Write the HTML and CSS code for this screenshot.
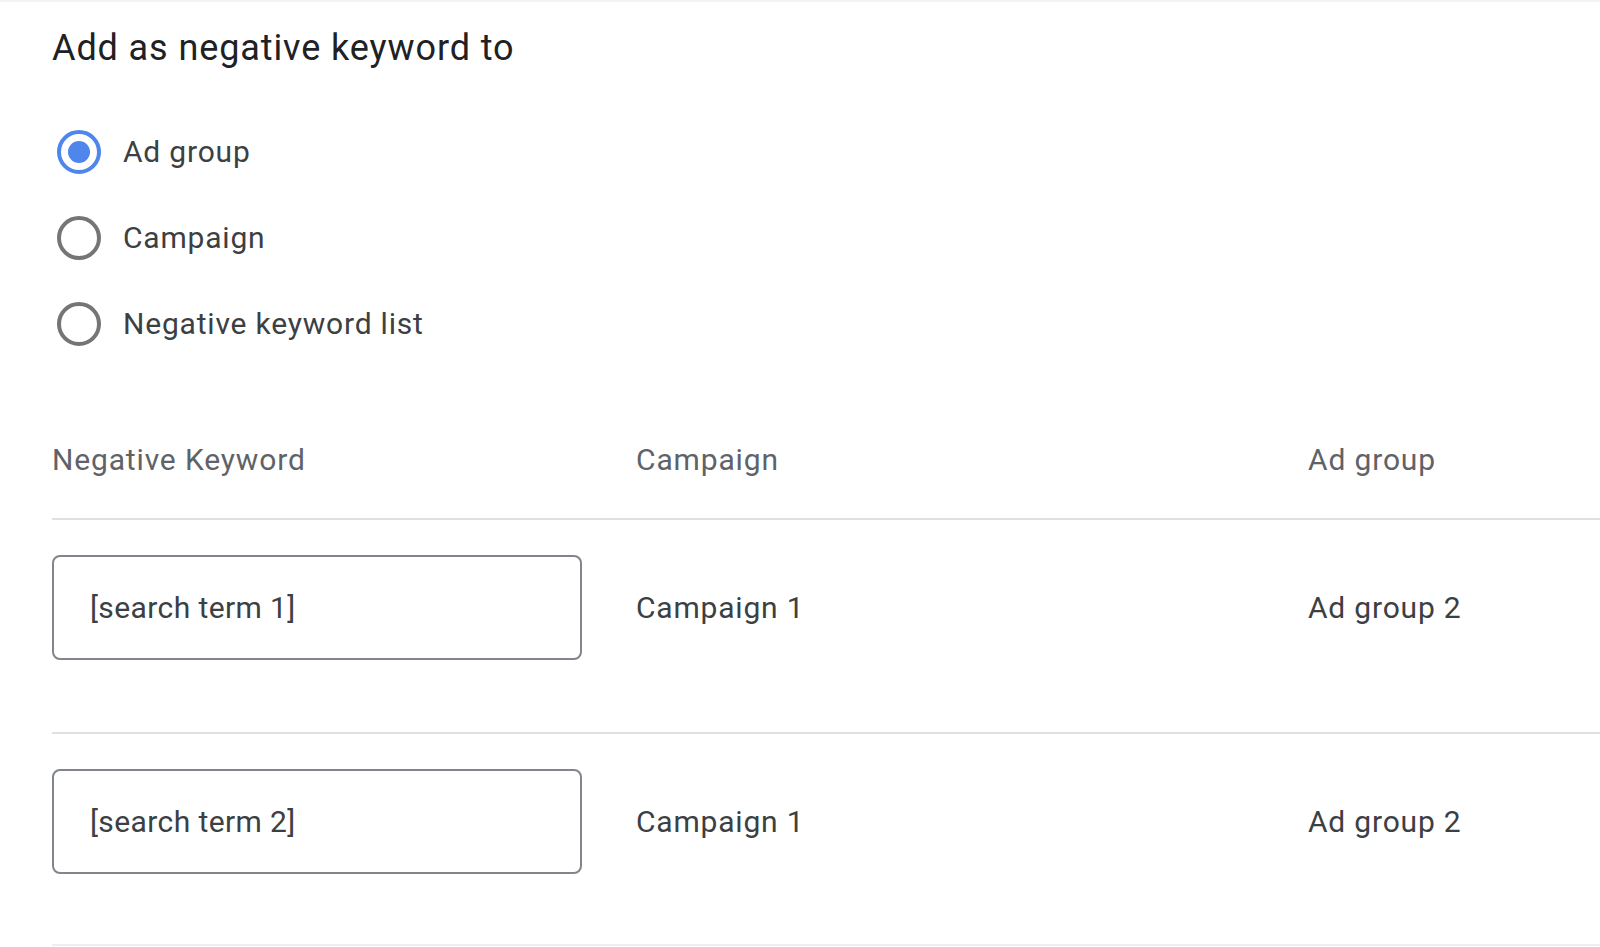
FILE: index.html
```html
<!DOCTYPE html>
<html lang="en">
<head>
<meta charset="utf-8">
<title>Add as negative keyword to</title>
<link rel="stylesheet" href="styles.css">
</head>
<body>
<div class="page">
  <h1 class="title">Add as negative keyword to</h1>
  <div class="radios">
    <label class="radio-row">
      <span class="radio checked"><span class="dot"></span></span>
      <span class="radio-label">Ad group</span>
    </label>
    <label class="radio-row">
      <span class="radio"></span>
      <span class="radio-label">Campaign</span>
    </label>
    <label class="radio-row">
      <span class="radio"></span>
      <span class="radio-label">Negative keyword list</span>
    </label>
  </div>
  <div class="table">
    <div class="thead">
      <div class="th">Negative Keyword</div>
      <div class="th">Campaign</div>
      <div class="th">Ad group</div>
    </div>
    <div class="tr">
      <div class="td"><input class="kw-input" type="text" value="[search term 1]"></div>
      <div class="td">Campaign 1</div>
      <div class="td">Ad group 2</div>
    </div>
    <div class="tr">
      <div class="td"><input class="kw-input" type="text" value="[search term 2]"></div>
      <div class="td">Campaign 1</div>
      <div class="td">Ad group 2</div>
    </div>
  </div>
</div>
</body>
</html>
```
FILE: styles.css
```css
html, body {
  margin: 0;
  padding: 0;
  background: #ffffff;
}
body {
  font-family: Roboto, "Liberation Sans", Arial, sans-serif;
  color: #3c4043;
  border-top: 2px solid #f1f3f4;
  overflow: hidden;
}
.page {
  padding-left: 52px;
}
.title {
  margin: 0;
  padding-top: 24px;
  font-size: 36px;
  line-height: 44px;
  font-weight: 400;
  color: #202124;
  letter-spacing: 0.9px;
}
.radios {
  display: flex;
  flex-direction: column;
  margin-top: 39px;
}
.radio-row {
  display: flex;
  align-items: center;
  height: 86px;
  gap: 22px;
  padding-left: 5px;
}
.radio {
  box-sizing: border-box;
  width: 44px;
  height: 44px;
  border-radius: 50%;
  border: 4px solid #757575;
  display: flex;
  align-items: center;
  justify-content: center;
}
.radio.checked {
  border-color: #4f86ec;
}
.dot {
  width: 22px;
  height: 22px;
  border-radius: 50%;
  background: #4f86ec;
}
.radio-label {
  font-size: 30px;
  line-height: 36px;
  letter-spacing: 0.8px;
  color: #3c4043;
}
.table {
  margin-top: 75px;
}
.thead, .tr {
  display: grid;
  grid-template-columns: 584px 672px 1fr;
}
.thead {
  padding-bottom: 40px;
}
.th {
  font-size: 30px;
  line-height: 36px;
  letter-spacing: 0.85px;
  color: #5f6368;
}
.tr {
  border-top: 2px solid #e0e0e0;
  padding-top: 35px;
  padding-bottom: 72px;
  align-items: center;
}
.tr:last-child {
  padding-bottom: 70px;
  border-bottom: 2px solid #eeeeee;
}
.td {
  font-size: 30px;
  line-height: 36px;
  letter-spacing: 0.8px;
  color: #3c4043;
}
.kw-input {
  box-sizing: border-box;
  display: block;
  width: 530px;
  height: 105px;
  margin: 0;
  padding: 0 0 0 36px;
  border: 2px solid #80868b;
  border-radius: 8px;
  font-family: Roboto, "Liberation Sans", Arial, sans-serif;
  font-size: 30px;
  letter-spacing: 0.4px;
  color: #3c4043;
  background: #ffffff;
  outline: none;
}
```
